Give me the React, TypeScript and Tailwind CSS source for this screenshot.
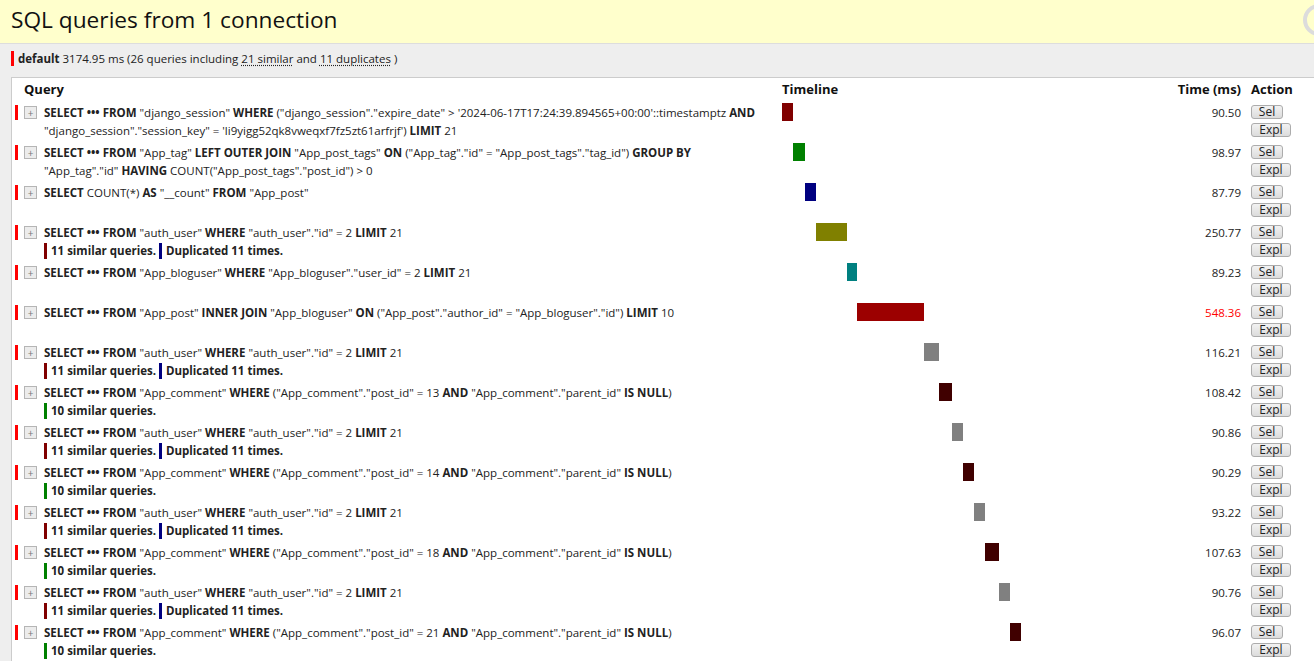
import React from 'react';

type Note = { text: string; color: string };
type Query = { lines: string[]; time: number; color: string; slow?: boolean; notes?: Note[] };

const TOTAL = 3174.95;
const TIMELINE_W = 388;

const authUser = ['**SELECT ••• FROM** "auth_user" **WHERE** "auth_user"."id" = 2 **LIMIT** 21'];
const comment = (id: number) => [
  `**SELECT ••• FROM** "App_comment" **WHERE** ("App_comment"."post_id" = ${id} **AND** "App_comment"."parent_id" **IS NULL**)`,
];
const authNotes: Note[] = [
  { text: '11 similar queries.', color: '#800000' },
  { text: 'Duplicated 11 times.', color: '#000080' },
];
const commentNotes: Note[] = [{ text: '10 similar queries.', color: '#008000' }];

const queries: Query[] = [
  {
    lines: [
      '**SELECT ••• FROM** "django_session" **WHERE** ("django_session"."expire_date" > \'2024-06-17T17:24:39.894565+00:00\'::timestamptz **AND**',
      '"django_session"."session_key" = \'li9yigg52qk8vweqxf7fz5zt61arfrjf\') **LIMIT** 21',
    ],
    time: 90.5,
    color: '#800000',
  },
  {
    lines: [
      '**SELECT ••• FROM** "App_tag" **LEFT OUTER JOIN** "App_post_tags" **ON** ("App_tag"."id" = "App_post_tags"."tag_id") **GROUP BY**',
      '"App_tag"."id" **HAVING** COUNT("App_post_tags"."post_id") > 0',
    ],
    time: 98.97,
    color: '#008000',
  },
  { lines: ['**SELECT** COUNT(*) **AS** "__count" **FROM** "App_post"'], time: 87.79, color: '#000080' },
  { lines: authUser, time: 250.77, color: '#808000', notes: authNotes },
  {
    lines: ['**SELECT ••• FROM** "App_bloguser" **WHERE** "App_bloguser"."user_id" = 2 **LIMIT** 21'],
    time: 89.23,
    color: '#008080',
  },
  {
    lines: [
      '**SELECT ••• FROM** "App_post" **INNER JOIN** "App_bloguser" **ON** ("App_post"."author_id" = "App_bloguser"."id") **LIMIT** 10',
    ],
    time: 548.36,
    color: '#9c0000',
    slow: true,
  },
  { lines: authUser, time: 116.21, color: '#808080', notes: authNotes },
  { lines: comment(13), time: 108.42, color: '#400000', notes: commentNotes },
  { lines: authUser, time: 90.86, color: '#808080', notes: authNotes },
  { lines: comment(14), time: 90.29, color: '#400000', notes: commentNotes },
  { lines: authUser, time: 93.22, color: '#808080', notes: authNotes },
  { lines: comment(18), time: 107.63, color: '#400000', notes: commentNotes },
  { lines: authUser, time: 90.76, color: '#808080', notes: authNotes },
  { lines: comment(21), time: 96.07, color: '#400000', notes: commentNotes },
];

function SqlLine({ text }: { text: string }) {
  const parts = text.split('**');
  return (
    <div className="h-[18px] leading-[18px] whitespace-nowrap">
      {parts.map((p, i) =>
        i % 2 === 1 ? (
          <strong key={i} className="font-bold">
            {p}
          </strong>
        ) : (
          <span key={i}>{p}</span>
        ),
      )}
    </div>
  );
}

function Btn({ label, w }: { label: string; w: string }) {
  return (
    <div
      className={`${w} h-[14px] flex items-center justify-center rounded-[3px] border border-[#acacac] bg-gradient-to-b from-[#f2f2f2] to-[#dcdcdc] text-[12px] leading-none text-[#222]`}
    >
      {label}
    </div>
  );
}

function Row({ q, start }: { q: Query; start: number }) {
  const left = (start / TOTAL) * TIMELINE_W;
  const width = (q.time / TOTAL) * TIMELINE_W;
  return (
    <div className="flex h-[40px]">
      <div className="w-[770px] flex items-start pt-[3px]">
        <div className="ml-[3px] w-[3px] h-[15px] bg-[#ff0000]" />
        <div className="ml-[6px] mt-[1px] w-[13px] h-[13px] border border-[#b5b5b5] bg-[#ececec] flex items-center justify-center text-[10px] leading-none text-[#777]">
          +
        </div>
        <div className="ml-[7px] -mt-[1px] text-[#222]">
          {q.lines.map((l, i) => (
            <SqlLine key={i} text={l} />
          ))}
          {q.notes && (
            <div className="flex items-center h-[18px] gap-[3px] font-bold text-[#222]">
              {q.notes.map((n, i) => (
                <div key={i} className="flex items-center">
                  <div className="w-[3px] h-[16px] mr-[4px]" style={{ backgroundColor: n.color }} />
                  <span>{n.text}</span>
                </div>
              ))}
            </div>
          )}
        </div>
      </div>
      <div className="relative w-[388px] h-full">
        <div
          className="absolute top-[1px] h-[18px]"
          style={{ left: `${left}px`, width: `${width}px`, backgroundColor: q.color }}
        />
      </div>
      <div
        className={`w-[71px] pt-[2px] leading-[18px] text-right ${q.slow ? 'text-[#ff0000]' : 'text-[#222]'}`}
      >
        {q.time.toFixed(2)}
      </div>
      <div className="pl-[10px] pt-[3px] flex flex-col gap-[4px]">
        <Btn label="Sel" w="w-[32px]" />
        <Btn label="Expl" w="w-[40px]" />
      </div>
    </div>
  );
}

export default function App() {
  let acc = 0;
  const starts = queries.map(q => {
    const s = acc;
    acc += q.time;
    return s;
  });
  return (
    <div
      className="relative w-full h-[661px] overflow-hidden bg-[#eeeeee] text-[11.5px] text-black"
      style={{ fontFamily: '"Open Sans", "Noto Sans", sans-serif' }}
    >
      <div className="h-[44px] bg-[#ffffcc] border-b border-[#dddddd] flex items-center pl-[11px]">
        <h3 className="text-[22.7px] leading-none text-[#111] pb-[2px]">SQL queries from 1 connection</h3>
      </div>
      <div className="absolute left-[1303px] top-[4px] w-[32px] h-[32px] rounded-full border-[4px] border-[#dcdcdc]" />

      <div className="h-[33px] flex items-start pt-[7px]">
        <div className="ml-[11px] w-[3px] h-[15px] bg-[#ff0000]" />
        <div className="ml-[4px] leading-[15px] text-[#222]">
          <strong className="font-bold">default</strong> 3174.95 ms (26 queries including{' '}
          <span className="underline decoration-dotted underline-offset-2">21 similar</span> and{' '}
          <span className="underline decoration-dotted underline-offset-2">11 duplicates</span> )
        </div>
      </div>

      <div className="ml-[11px] border-t border-l border-[#cccccc] bg-white">
        <div className="flex h-[24px] items-center font-bold text-[13px] text-[#111]">
          <div className="w-[770px] pl-[12px]">Query</div>
          <div className="w-[388px]">Timeline</div>
          <div className="w-[71px] text-right">Time (ms)</div>
          <div className="pl-[10px]">Action</div>
        </div>
        {queries.map((q, i) => (
          <Row key={i} q={q} start={starts[i]} />
        ))}
      </div>
    </div>
  );
}
